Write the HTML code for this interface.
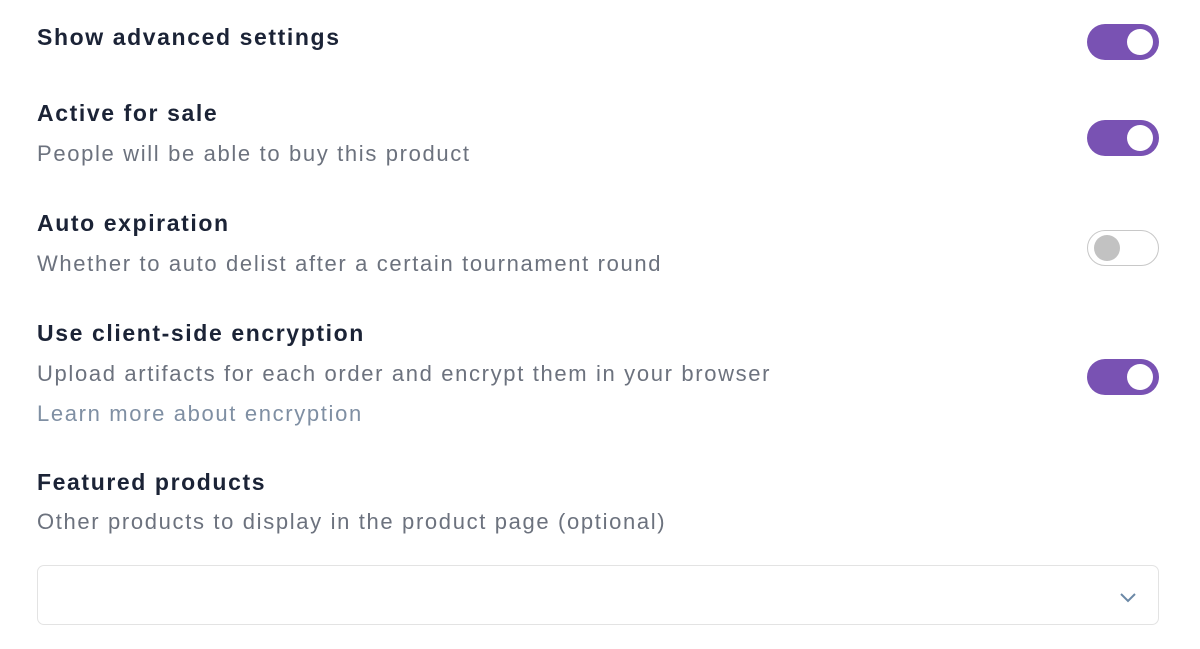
<!DOCTYPE html>
<html><head><meta charset="utf-8"><style>
body{margin:0;width:1200px;height:649px;background:#fff;font-family:"Liberation Sans",sans-serif;position:relative;overflow:hidden}
.t{position:absolute;left:37px;white-space:nowrap}
.h{font-weight:bold;font-size:23px;color:#1b2336;letter-spacing:1.6px}
.d{font-size:22px;color:#6c727e;letter-spacing:1.65px}
.l{color:#7f8fa3}
.tg{position:absolute;left:1087px;width:72px;height:36px;border-radius:18px;background:#7952b3}
.tg::after{content:"";position:absolute;right:6px;top:5px;width:26px;height:26px;border-radius:50%;background:#fff}
.off{background:#fff;border:1px solid #c8c8c8;box-sizing:border-box}
.off::after{left:6px;right:auto;top:4px;background:#c2c2c2}
.sel{position:absolute;left:37px;top:565px;width:1122px;height:60px;box-sizing:border-box;border:1px solid #e3e3e3;border-radius:7px}
</style></head><body>
<div class="t h" style="top:24px">Show advanced settings</div>
<div class="tg" style="top:24px"></div>
<div class="t h" style="top:100px">Active for sale</div>
<div class="t d" style="top:141px">People will be able to buy this product</div>
<div class="tg" style="top:120px"></div>
<div class="t h" style="top:210px">Auto expiration</div>
<div class="t d" style="top:251px">Whether to auto delist after a certain tournament round</div>
<div class="tg off" style="top:230px"></div>
<div class="t h" style="top:320px">Use client-side encryption</div>
<div class="t d" style="top:361px">Upload artifacts for each order and encrypt them in your browser</div>
<div class="t d l" style="top:401px">Learn more about encryption</div>
<div class="tg" style="top:359px"></div>
<div class="t h" style="top:469px">Featured products</div>
<div class="t d" style="top:509px">Other products to display in the product page (optional)</div>
<div class="sel"><svg style="position:absolute;left:1081px;top:26px" width="18" height="12" viewBox="0 0 18 12"><path d="M2 2l7 7 7-7" fill="none" stroke="#6b88a6" stroke-width="2"/></svg></div>
</body></html>
